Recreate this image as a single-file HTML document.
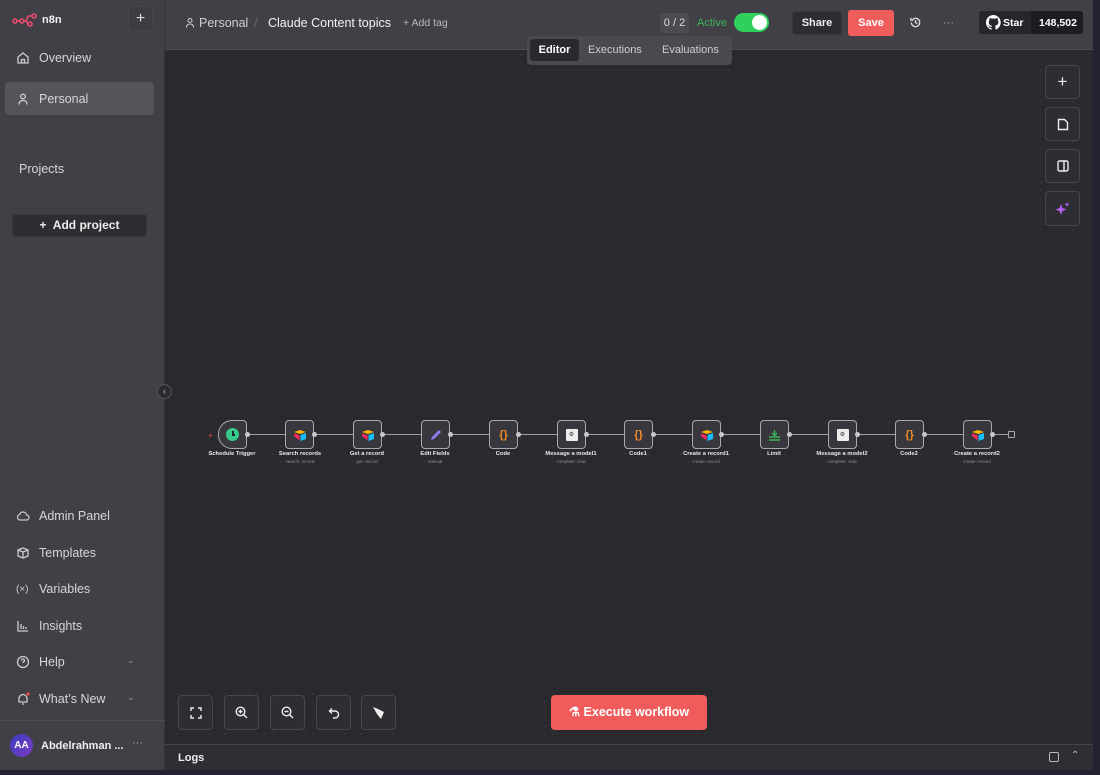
<!DOCTYPE html>
<html><head><meta charset="utf-8"><style>
*{box-sizing:border-box;margin:0;padding:0}
body{width:1100px;height:775px;overflow:hidden;background:#24232a;font-family:"Liberation Sans",sans-serif;position:relative;color:#d8d8dc}
.side{position:absolute;left:0;top:0;width:165px;height:770px;background:#414046;border-right:1px solid #35343a}
.hdr{position:absolute;left:165px;top:0;width:928px;height:50px;background:#414046;border-bottom:1px solid #4c4b52}
.canvas{position:absolute;left:165px;top:50px;width:928px;height:694px;background-color:#2a292e;background-image:radial-gradient(#36353b 0.8px,transparent 0.9px);background-size:8px 8px}
.logs{position:absolute;left:165px;top:744px;width:928px;height:26px;background:#2f2e33;border-top:1px solid #444349}
.strip{position:absolute;right:0;top:0;width:7px;height:775px;background:#232232}
.bstrip{position:absolute;left:0;bottom:0;width:1100px;height:5px;background:#232232}
.nav{position:absolute;left:16px;font-size:12.5px;color:#d6d6da;display:flex;align-items:center;gap:9px}
.nav svg{width:14px;height:14px}
.btn{position:absolute;border:1px solid #47464c;border-radius:4px;background:#2e2d32;display:flex;align-items:center;justify-content:center}
.node{position:absolute;top:420px;width:29px;height:29px;background:#38373d;border:1.5px solid #a9a9af;border-radius:4px;display:flex;align-items:center;justify-content:center}
.lbl{position:absolute;top:451px;font-size:5.8px;font-weight:bold;color:#e8e8ea;text-align:center;width:80px}
.sub{position:absolute;top:459px;font-size:4.5px;color:#8b8b90;text-align:center;width:80px}
.dot{position:absolute;width:5px;height:5px;border-radius:50%;background:#c8c8cc;top:432px}
.line{position:absolute;height:1px;background:#a0a0a6;top:434px}
</style></head><body>
<div class="side">
 <div style="position:absolute;left:12px;top:13px;display:flex;align-items:center;gap:4px">
  <svg width="26" height="14" viewBox="0 0 26 14"><g fill="none" stroke="#ea4b71" stroke-width="1.6"><circle cx="3" cy="8" r="2"/><circle cx="10" cy="8" r="2"/><circle cx="18" cy="11" r="2"/><circle cx="22" cy="3" r="2"/><path d="M5 8h3M12 8h2c1 0 1-5 3-5h3M14 8c1 0 1 3 2 3"/></g></svg>
  <span style="font-size:11px;font-weight:bold;color:#f0f0f2">n8n</span></div>
 <div class="btn" style="left:128px;top:6px;width:25px;height:25px;background:#3d3c42;color:#ddd;font-size:16px">+</div>
 <div class="nav" style="top:51px"><svg viewBox="0 0 14 14" fill="none" stroke="#ccc" stroke-width="1.3"><path d="M2 6l5-4 5 4v6H2z M5.5 12V8.5h3V12"/></svg>Overview</div>
 <div style="position:absolute;left:5px;top:82px;width:149px;height:33px;background:#55545a;border-radius:4px"></div>
 <div class="nav" style="top:92px"><svg viewBox="0 0 14 14" fill="none" stroke="#ccc" stroke-width="1.3"><circle cx="7" cy="4.5" r="2.3"/><path d="M3 12.5c0-3 2-4 4-4s4 1 4 4"/></svg>Personal</div>
 <div style="position:absolute;left:19px;top:162px;font-size:12.5px;color:#d8d8dc">Projects</div>
 <div style="position:absolute;left:12px;top:214px;width:135px;height:23px;background:#2e2d32;border:1px solid #3a393f;border-radius:3px;font-size:12px;font-weight:bold;color:#eee;text-align:center;line-height:21px">+&nbsp; Add project</div>
 <div class="nav" style="top:509px"><svg viewBox="0 0 14 14" fill="none" stroke="#ccc" stroke-width="1.2"><path d="M4 11h6.5a2.5 2.5 0 0 0 0-5 3.5 3.5 0 0 0-6.8-.5A2.8 2.8 0 0 0 4 11z"/></svg>Admin Panel</div>
 <div class="nav" style="top:546px"><svg viewBox="0 0 14 14" fill="none" stroke="#ccc" stroke-width="1.3"><path d="M2 4l5-2 5 2v6l-5 2-5-2z M2 4l5 2 5-2 M7 6v6"/></svg>Templates</div>
 <div class="nav" style="top:582px"><span style="width:14px;font-size:10px;color:#ccc">(×)</span>Variables</div>
 <div class="nav" style="top:619px"><svg viewBox="0 0 14 14" fill="none" stroke="#ccc" stroke-width="1.3"><path d="M2 2v10h10M5 5v5M7.5 7v3M10 8v2"/></svg>Insights</div>
 <div class="nav" style="top:655px"><svg viewBox="0 0 14 14" fill="none" stroke="#ccc" stroke-width="1.3"><circle cx="7" cy="7" r="5.5"/><path d="M5.5 5.5a1.5 1.5 0 1 1 2 1.4c-.5.2-.5.6-.5 1.1M7 10v.3"/></svg>Help</div>
 <div class="nav" style="top:692px"><svg viewBox="0 0 14 14" fill="none" stroke="#ccc" stroke-width="1.3"><path d="M3 10V6.5a4 4 0 0 1 8 0V10H2.5h9M6 12h2"/><circle cx="12" cy="2" r="1.6" fill="#ef4a4a" stroke="none"/></svg>What’s New</div>
 <div style="position:absolute;left:127px;top:655px;color:#999;font-size:9px">&#8964;</div>
 <div style="position:absolute;left:127px;top:692px;color:#999;font-size:9px">&#8964;</div>
 <div style="position:absolute;left:0;top:720px;width:165px;height:1px;background:#4e4d53"></div>
 <div style="position:absolute;left:10px;top:734px;width:23px;height:23px;border-radius:50%;background:linear-gradient(135deg,#3b3ec2,#7a3ac0);font-size:10px;font-weight:bold;color:#fff;text-align:center;line-height:23px">AA</div>
 <div style="position:absolute;left:41px;top:740px;font-size:11px;font-weight:bold;color:#eee">Abdelrahman ...</div>
 <div style="position:absolute;left:132px;top:737px;color:#aaa;font-size:11px">···</div>
</div>
<div class="hdr">
 <svg style="position:absolute;left:20px;top:17px" width="10" height="12" viewBox="0 0 10 12" fill="none" stroke="#ccc" stroke-width="1.1"><circle cx="5" cy="3.5" r="2"/><path d="M1.5 10.5c0-2.5 1.5-3.5 3.5-3.5s3.5 1 3.5 3.5"/></svg>
 <div style="position:absolute;left:34px;top:16px;font-size:12.5px;color:#cfcfd3">Personal</div>
 <div style="position:absolute;left:89px;top:14px;font-size:14px;color:#666">/</div>
 <div style="position:absolute;left:103px;top:16px;font-size:12.5px;color:#f2f2f4">Claude Content topics</div>
 <div style="position:absolute;left:238px;top:17px;font-size:10.5px;color:#bbb">+ Add tag</div>
 <div style="position:absolute;left:495px;top:13px;width:29px;height:20px;background:#4c4b51;border-radius:3px;font-size:11px;color:#ddd;text-align:center;line-height:20px">0 / 2</div>
 <div style="position:absolute;left:532px;top:17px;font-size:11px;color:#3cb55a">Active</div>
 <div style="position:absolute;left:569px;top:13px;width:35px;height:19px;border-radius:10px;background:#2ed15c"><div style="position:absolute;right:2px;top:2px;width:15px;height:15px;border-radius:50%;background:#fff"></div></div>
 <div style="position:absolute;left:627px;top:11px;width:50px;height:24px;background:#2d2c31;border:1px solid #39383e;border-radius:3px;font-size:11px;font-weight:bold;color:#eee;text-align:center;line-height:22px">Share</div>
 <div style="position:absolute;left:683px;top:10px;width:46px;height:26px;background:#f05c5c;border-radius:3px;font-size:11px;font-weight:bold;color:#fff;text-align:center;line-height:26px">Save</div>
 <svg style="position:absolute;left:744px;top:16px" width="13" height="13" viewBox="0 0 14 14" fill="none" stroke="#ddd" stroke-width="1.4"><path d="M2.5 7a4.5 4.5 0 1 0 1.3-3.2M2 2v2.5h2.5M7 4.5V7l2 1.2"/></svg>
 <div style="position:absolute;left:778px;top:17px;color:#aaa;font-size:11px">···</div>
 <div style="position:absolute;left:814px;top:11px;width:104px;height:23px;background:#1d1c22;border-radius:3px"></div>
 <div style="position:absolute;left:814px;top:11px;width:52px;height:23px;background:#27262c;border-radius:3px 0 0 3px"></div>
 <svg style="position:absolute;left:821px;top:15px" width="15" height="15" viewBox="0 0 16 16"><path fill="#fff" d="M8 0a8 8 0 0 0-2.5 15.6c.4 0 .5-.2.5-.4v-1.5c-2.2.5-2.7-1-2.7-1-.4-.9-.9-1.2-.9-1.2-.7-.5.1-.5.1-.5.8.1 1.2.8 1.2.8.7 1.3 1.900.9 2.4.7 0-.5.3-.9.5-1.1-1.8-.2-3.6-.9-3.6-4 0-.9.3-1.6.8-2.1-.1-.2-.4-1 .1-2.1 0 0 .7-.2 2.2.8a7.5 7.5 0 0 1 4 0c1.5-1 2.2-.8 2.2-.8.4 1.1.2 1.9.1 2.1.5.6.8 1.3.8 2.1 0 3.1-1.9 3.7-3.6 3.9.3.3.5.8.5 1.5v2.2c0 .2.1.5.6.4A8 8 0 0 0 8 0z"/></svg>
 <div style="position:absolute;left:838px;top:17px;font-size:10.5px;font-weight:bold;color:#fff">Star</div>
 <div style="position:absolute;left:874px;top:17px;font-size:10.5px;font-weight:bold;color:#fff">148,502</div>
</div>
<div class="canvas">
 <div style="position:absolute;left:362px;top:-14px;width:205px;height:29px;background:#4a494f;border-radius:4px"></div>
 <div style="position:absolute;left:365px;top:-11px;width:49px;height:22px;background:#2a292e;border-radius:3px;font-size:11px;font-weight:bold;color:#fff;text-align:center;line-height:22px">Editor</div>
 <div style="position:absolute;left:423px;top:-6px;font-size:11px;color:#cdcdd1">Executions</div>
 <div style="position:absolute;left:497px;top:-6px;font-size:11px;color:#cdcdd1">Evaluations</div>
 <div class="btn" style="left:880px;top:15px;width:35px;height:34px;color:#eee;font-size:17px">+</div>
 <div class="btn" style="left:880px;top:57px;width:35px;height:34px"><svg width="12" height="13" viewBox="0 0 12 13" fill="none" stroke="#eee" stroke-width="1.4"><path d="M1.5 1.5h6l3 3v7h-9z"/></svg></div>
 <div class="btn" style="left:880px;top:99px;width:35px;height:34px"><svg width="12" height="12" viewBox="0 0 12 12" fill="none" stroke="#eee" stroke-width="1.4"><rect x="1" y="1" width="10" height="10" rx="1.5"/><path d="M7 1v10"/></svg></div>
 <div class="btn" style="left:880px;top:141px;width:35px;height:35px"><svg width="16" height="16" viewBox="0 0 16 16" fill="#b05ef0"><path d="M6 3l1.5 4 4 1.5-4 1.5L6 14l-1.5-4-4-1.5 4-1.5z"/><path d="M12 1l.7 1.8 1.8.7-1.8.7L12 6l-.7-1.8-1.8-.7 1.8-.7z"/></svg></div>
 <div style="position:absolute;left:-8px;top:334px;width:15px;height:15px;border-radius:50%;background:#2c2b30;border:1px solid #555;color:#bbb;font-size:9px;text-align:center;line-height:12px">‹</div>
 <div class="btn" style="left:13px;top:645px;width:35px;height:35px"><svg width="12" height="12" viewBox="0 0 12 12" fill="none" stroke="#eee" stroke-width="1.4"><path d="M1 4V1h3M8 1h3v3M11 8v3H8M4 11H1V8"/></svg></div>
 <div class="btn" style="left:59px;top:645px;width:35px;height:35px"><svg width="13" height="13" viewBox="0 0 13 13" fill="none" stroke="#eee" stroke-width="1.4"><circle cx="5.5" cy="5.5" r="4.3"/><path d="M8.5 8.5l3.5 3.5M3.5 5.5h4M5.5 3.5v4"/></svg></div>
 <div class="btn" style="left:105px;top:645px;width:35px;height:35px"><svg width="13" height="13" viewBox="0 0 13 13" fill="none" stroke="#eee" stroke-width="1.4"><circle cx="5.5" cy="5.5" r="4.3"/><path d="M8.5 8.5l3.5 3.5M3.5 5.5h4"/></svg></div>
 <div class="btn" style="left:151px;top:645px;width:35px;height:35px"><svg width="12" height="12" viewBox="0 0 12 12" fill="none" stroke="#eee" stroke-width="1.4"><path d="M4 1.5L1.5 4 4 6.5M1.5 4H7a3.5 3.5 0 0 1 0 7H5"/></svg></div>
 <div class="btn" style="left:196px;top:645px;width:35px;height:35px"><svg width="14" height="14" viewBox="0 0 14 14" fill="#eee"><path d="M1 1l5 2 6 3-3 7-4-5z"/></svg></div>
 <div style="position:absolute;left:386px;top:645px;width:156px;height:35px;background:#f05c5c;border-radius:4px;font-size:12.5px;font-weight:bold;color:#fff;text-align:center;line-height:35px">&#9879;&#xFE0E; Execute workflow</div>
</div>
<div style="position:absolute;left:208px;top:431px;color:#ef4a4a;font-size:8px">+</div>
<div class="node" style="left:218px;border-radius:14px 4px 4px 14px"><div style="width:13px;height:13px;border-radius:50%;background:#35c98a;position:relative"><div style="position:absolute;left:6px;top:3px;width:1.5px;height:4px;background:#223"></div><div style="position:absolute;left:6px;top:6px;width:3px;height:1.5px;background:#223"></div></div></div>
<div class="node" style="left:285px"><svg width="14" height="12" viewBox="0 0 14 12"><path d="M1 3l6-2 6 2-6 2z" fill="#fcb400"/><path d="M7.5 6l5.5-2v6l-5.5 2z" fill="#18bfff"/><path d="M1 4.5l5.5 2v5L1 7z" fill="#f82b60"/></svg></div>
<div class="node" style="left:353px"><svg width="14" height="12" viewBox="0 0 14 12"><path d="M1 3l6-2 6 2-6 2z" fill="#fcb400"/><path d="M7.5 6l5.5-2v6l-5.5 2z" fill="#18bfff"/><path d="M1 4.5l5.5 2v5L1 7z" fill="#f82b60"/></svg></div>
<div class="node" style="left:421px"><svg width="14" height="14" viewBox="0 0 14 14"><path d="M2 12l1-3 7-7 2 2-7 7z" fill="#8e7cf0"/></svg></div>
<div class="node" style="left:489px;color:#f28c28;font-size:11px;font-weight:bold">{}</div>
<div class="node" style="left:557px"><div style="width:12px;height:12px;background:#eee;border-radius:1px;font-size:6px;color:#333;text-align:center;line-height:12px">⚙</div></div>
<div class="node" style="left:624px;color:#f28c28;font-size:11px;font-weight:bold">{}</div>
<div class="node" style="left:692px"><svg width="14" height="12" viewBox="0 0 14 12"><path d="M1 3l6-2 6 2-6 2z" fill="#fcb400"/><path d="M7.5 6l5.5-2v6l-5.5 2z" fill="#18bfff"/><path d="M1 4.5l5.5 2v5L1 7z" fill="#f82b60"/></svg></div>
<div class="node" style="left:760px"><svg width="13" height="12" viewBox="0 0 13 12" fill="none" stroke="#3cb55a" stroke-width="1.4"><path d="M6.5 1v5M4 4l2.5 2.5L9 4M1 8h11M1 11h11"/></svg></div>
<div class="node" style="left:828px"><div style="width:12px;height:12px;background:#eee;border-radius:1px;font-size:6px;color:#333;text-align:center;line-height:12px">⚙</div></div>
<div class="node" style="left:895px;color:#f28c28;font-size:11px;font-weight:bold">{}</div>
<div class="node" style="left:963px"><svg width="14" height="12" viewBox="0 0 14 12"><path d="M1 3l6-2 6 2-6 2z" fill="#fcb400"/><path d="M7.5 6l5.5-2v6l-5.5 2z" fill="#18bfff"/><path d="M1 4.5l5.5 2v5L1 7z" fill="#f82b60"/></svg></div>
<div style="position:absolute;left:1008px;top:431px;width:7px;height:7px;border:1px solid #aaa;border-radius:1px"></div>
<div class="line" style="left:248px;width:37px"></div><div class="line" style="left:315px;width:38px"></div><div class="line" style="left:383px;width:38px"></div><div class="line" style="left:451px;width:38px"></div><div class="line" style="left:519px;width:38px"></div><div class="line" style="left:587px;width:37px"></div><div class="line" style="left:654px;width:38px"></div><div class="line" style="left:722px;width:38px"></div><div class="line" style="left:790px;width:38px"></div><div class="line" style="left:858px;width:37px"></div><div class="line" style="left:925px;width:38px"></div><div class="line" style="left:993px;width:15px"></div>
<div class="dot" style="left:245px"></div><div class="dot" style="left:312px"></div><div class="dot" style="left:380px"></div><div class="dot" style="left:448px"></div><div class="dot" style="left:516px"></div><div class="dot" style="left:584px"></div><div class="dot" style="left:651px"></div><div class="dot" style="left:719px"></div><div class="dot" style="left:787px"></div><div class="dot" style="left:855px"></div><div class="dot" style="left:922px"></div><div class="dot" style="left:990px"></div>
<div class="lbl" style="left:192px">Schedule Trigger</div>
<div class="lbl" style="left:260px">Search records</div><div class="sub" style="left:260px">search: record</div>
<div class="lbl" style="left:327px">Get a record</div><div class="sub" style="left:327px">get: record</div>
<div class="lbl" style="left:395px">Edit Fields</div><div class="sub" style="left:395px">manual</div>
<div class="lbl" style="left:463px">Code</div>
<div class="lbl" style="left:531px">Message a model1</div><div class="sub" style="left:531px">complete: chat</div>
<div class="lbl" style="left:598px">Code1</div>
<div class="lbl" style="left:666px">Create a record1</div><div class="sub" style="left:666px">create: record</div>
<div class="lbl" style="left:734px">Limit</div>
<div class="lbl" style="left:802px">Message a model2</div><div class="sub" style="left:802px">complete: chat</div>
<div class="lbl" style="left:869px">Code2</div>
<div class="lbl" style="left:937px">Create a record2</div><div class="sub" style="left:937px">create: record</div>
<div class="logs"><div style="position:absolute;left:13px;top:7px;font-size:11px;font-weight:bold;color:#eee">Logs</div>
<div style="position:absolute;left:884px;top:7px;width:10px;height:10px;border:1.3px solid #bbb;border-radius:2px"></div>
<div style="position:absolute;left:906px;top:5px;color:#bbb;font-size:10px">&#8963;</div></div>
<div class="strip"></div><div class="bstrip"></div>
</body></html>
